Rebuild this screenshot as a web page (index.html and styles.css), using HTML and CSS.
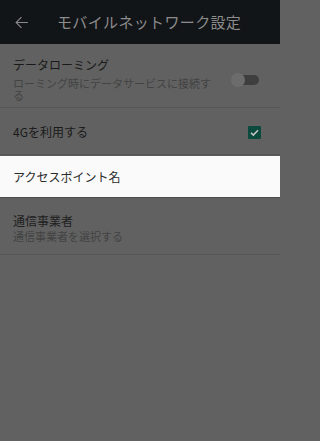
FILE: index.html
```html
<!DOCTYPE html>
<html lang="ja">
<head>
<meta charset="utf-8">
<title>モバイルネットワーク設定</title>
<link rel="stylesheet" href="styles.css">
</head>
<body>
<div class="screen">
  <header class="appbar">
    <svg class="back" width="19" height="19" viewBox="0 0 24 24"><path d="M20 11.25H6.9l5.5-5.5L11.45 4.8 4.25 12l7.2 7.2.95-.95-5.5-5.5H20v-1.5z" fill="#8a8a8a"/></svg>
    <div class="title">モバイルネットワーク設定</div>
  </header>
  <div class="list">
    <div class="row row-roaming">
      <div class="texts">
        <div class="primary">データローミング</div>
        <div class="secondary">ローミング時にデータサービスに接続する</div>
      </div>
      <div class="switch"><span class="thumb"></span></div>
    </div>
    <div class="row row-4g">
      <div class="texts">
        <div class="primary">4Gを利用する</div>
      </div>
      <div class="checkbox">
        <svg width="13" height="13" viewBox="0 0 13 13"><path d="M3 6.7l2.3 2.3L10 4.3" fill="none" stroke="#c4c4c4" stroke-width="1.6"/></svg>
      </div>
    </div>
    <div class="row row-apn">
      <div class="texts">
        <div class="primary">アクセスポイント名</div>
      </div>
    </div>
    <div class="row row-carrier">
      <div class="texts">
        <div class="primary">通信事業者</div>
        <div class="secondary">通信事業者を選択する</div>
      </div>
    </div>
  </div>
</div>
</body>
</html>
```
FILE: styles.css
```css
html, body {
  margin: 0;
  padding: 0;
}
body {
  background: #616161;
  font-family: "Noto Sans CJK JP", "Noto Sans", sans-serif;
}
.screen {
  width: 280px;
  height: 441px;
  background: #616161;
  overflow: hidden;
}
.appbar {
  height: 44px;
  background: #121518;
  display: flex;
  align-items: center;
  padding-left: 12px;
  box-sizing: border-box;
}
.back {
  display: block;
  margin-top: 1px;
}
.title {
  margin-left: 26px;
  font-size: 15px;
  letter-spacing: 0.35px;
  line-height: 20px;
  color: #8c8c8c;
  white-space: nowrap;
}
.list {
  display: flex;
  flex-direction: column;
}
.row {
  display: flex;
  align-items: center;
  padding: 0 18px 0 13px;
  border-bottom: 1px solid #575757;
  box-sizing: border-box;
  gap: 14px;
}
.texts {
  flex: 1;
  display: flex;
  flex-direction: column;
}
.primary {
  font-size: 12px;
  line-height: 18px;
  color: #1a1a1a;
}
.secondary {
  font-size: 11px;
  line-height: 12px;
  color: #434343;
}
.row-roaming {
  height: 64px;
  padding-top: 5px;
}
.row-roaming .secondary {
  margin-top: 3px;
}
.row-4g {
  height: 47px;
  padding-top: 2px;
}
.row-apn {
  height: 43px;
  background: #fafafa;
  border-top: 1px solid #5a5a5a;
  border-bottom: 1px solid #4c4c4c;
  padding-top: 1px;
}
.row-apn .primary {
  color: #2a2a2a;
}
.row-carrier {
  height: 57px;
  padding-top: 2px;
}
.row-carrier .primary {
  color: #202020;
}
.row-carrier .secondary {
  line-height: 13px;
}
.switch {
  position: relative;
  width: 26px;
  height: 10px;
  border-radius: 5px;
  background: #3e3e3e;
  margin-right: 3px;
  margin-top: 4px;
}
.thumb {
  position: absolute;
  left: -2px;
  top: -2px;
  width: 14px;
  height: 14px;
  border-radius: 50%;
  background: #6c6c6c;
}
.checkbox {
  width: 13px;
  height: 13px;
  background: #0c4a3e;
  border-radius: 1px;
  margin-right: 1px;
}
.checkbox svg {
  display: block;
}
```
